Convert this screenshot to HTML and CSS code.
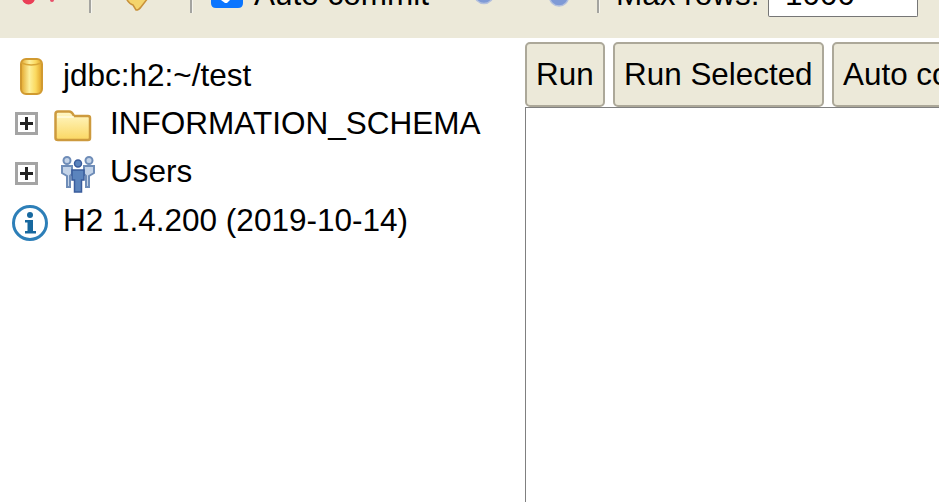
FILE: index.html
```html
<!DOCTYPE html>
<html lang="en">
<head>
  <meta charset="UTF-8" />
  <title>H2 Console</title>
  <link rel="stylesheet" href="styles.css">
</head>
<body>

  <div class="toolbar">
    <svg class="tool-icon icon-stop" width="40" height="20" viewBox="0 0 40 20">
      <circle cx="10.500" cy="-2" r="6.500" fill="#ea3f57"/>
      <circle cx="34" cy="0" r="2" fill="#e8506a"/>
    </svg>
    <span class="sep sep-first"></span>
    <svg class="tool-icon icon-refresh" width="30" height="20" viewBox="0 0 30 20">
      <path d="M4 -2 Q7 4 11 5 L14 10 Q17 10 19 7 L26 -2 Z" fill="#f4d46c" stroke="#c8913a" stroke-width="1.500"/>
    </svg>
    <span class="sep sep-second"></span>
    <svg class="checkbox" width="32" height="8" viewBox="0 0 32 8">
      <path d="M0 -6 L32 -6 L32 3 Q32 8 27 8 L5 8 Q0 8 0 3 Z" fill="#0a75ff"/>
      <path d="M10 0 L14 3 L16 3 L19 0 Z" fill="white"/>
    </svg>
    <span class="tool-label label-auto">Auto commit</span>
    <svg class="tool-icon icon-round" width="24" height="20" viewBox="0 0 24 20">
      <circle cx="12" cy="-6" r="9.500" fill="#7f9ad6" stroke="#b3c0de" stroke-width="1.500"/>
    </svg>
    <svg class="tool-icon icon-round-two" width="24" height="20" viewBox="0 0 24 20">
      <circle cx="12" cy="-3.500" r="9.500" fill="#7f9ad6" stroke="#b3c0de" stroke-width="1.500"/>
    </svg>
    <span class="sep sep-third"></span>
    <span class="tool-label label-rows">Max rows:</span>
    <div class="rows-select"><span class="rows-value">1000</span></div>
  </div>

  <div class="main">
    <div class="tree">
      <div class="tree-row">
        <svg class="tree-icon soft" width="38" height="40" viewBox="0 0 38 40">
          <defs>
            <linearGradient id="can" x1="0" x2="1" y1="0" y2="0">
              <stop offset="0" stop-color="#e3a62b"/>
              <stop offset="0.4" stop-color="#fdf09c"/>
              <stop offset="0.7" stop-color="#fbd95f"/>
              <stop offset="1" stop-color="#e0a126"/>
            </linearGradient>
          </defs>
          <rect x="9" y="4" width="21" height="35" rx="5" fill="url(#can)" stroke="#d19a30" stroke-width="2"/>
          <path d="M9.500 8 Q19 12 29.500 8" fill="none" stroke="#d9a636" stroke-width="1.500"/>
        </svg>
        <span>jdbc:h2:~/test</span>
      </div>
      <div class="tree-row">
        <span class="plus-box"></span>
        <svg class="folder soft" width="38" height="32" viewBox="0 0 38 32">
          <defs>
            <linearGradient id="fold" x1="0" x2="0" y1="0" y2="1">
              <stop offset="0" stop-color="#fff8c8"/>
              <stop offset="1" stop-color="#fbd762"/>
            </linearGradient>
          </defs>
          <path d="M1.500 4 Q1.500 1.500 4 1.500 L15 1.500 Q18 1.500 20 6 L34 6 Q36 6 36 8 L36 28 Q36 30 34 30 L4 30 Q1.500 30 1.500 28 Z" fill="url(#fold)" stroke="#cd9a3e" stroke-width="2.500"/>
          <path d="M3 7 L20 7" stroke="#fffbe0" stroke-width="1.500"/>
        </svg>
        <span>INFORMATION_SCHEMA</span>
      </div>
      <div class="tree-row">
        <span class="plus-box plus-low"></span>
        <svg class="users soft" width="44" height="38" viewBox="0 0 44 38">
          <g fill="#c3d3e8" stroke="#6f8db8" stroke-width="2">
            <circle cx="13" cy="4.500" r="3.500"/>
            <path d="M8 10 L18 10 L18 18 L16 20 L16 31 L13 31 L13 20 L8 17 Z"/>
            <circle cx="35" cy="4.500" r="3.500"/>
            <path d="M30 10 L40 10 L40 17 L35 20 L35 31 L32 31 L32 20 L30 18 Z"/>
          </g>
          <g fill="#5b84bd" stroke="#3a5c9c" stroke-width="1.500">
            <circle cx="24" cy="7.500" r="3.500"/>
            <path d="M18 14 L30 14 L30 24 L27.500 24 L27.500 36 L20.500 36 L20.500 24 L18 24 Z"/>
          </g>
        </svg>
        <span>Users</span>
      </div>
      <div class="tree-row">
        <svg class="tree-icon info soft" width="38" height="38" viewBox="0 0 38 38">
          <circle cx="18" cy="19" r="16.500" fill="#fff" stroke="#2d7fb8" stroke-width="3"/>
          <circle cx="18" cy="11" r="3" fill="#17689f"/>
          <path d="M13 16 L21 16 L21 27 L24 27 L24 29.500 L13 29.500 L13 27 L15.500 27 L15.500 18.500 L13 18.500 Z" fill="#17689f"/>
        </svg>
        <span>H2 1.4.200 (2019-10-14)</span>
      </div>
    </div>

    <div class="query">
      <div class="buttons">
        <button>Run</button>
        <button>Run Selected</button>
        <button>Auto complete</button>
        <button>Clear</button>
      </div>
      <div class="sql-box"></div>
    </div>
  </div>

</body>
</html>
```

FILE: styles.css
```css
* {
  box-sizing: border-box;
  margin: 0;
  padding: 0;
}
html, body {
  height: 100%;
  width: 100%;
  overflow: hidden;
}
body {
  background: white;
  color: black;
  font-family: "Liberation Sans", Arial, sans-serif;
  font-size: 31.5px;
}
.toolbar {
  background: #ece9d9;
  height: 38px;
  display: flex;
  align-items: flex-start;
  overflow: hidden;
  padding-left: 18px;
}
.tool-icon {
  flex: none;
}
.soft {
  filter: blur(0.4px);
}
.toolbar svg {
  filter: blur(0.5px);
}
.sep {
  width: 3px;
  height: 13px;
  background: #a4a4a0;
  border-right: 1px solid #f6f5ee;
  flex: none;
}
.sep-first { margin-left: 31px; }
.icon-refresh { margin-left: 30px; }
.sep-second { margin-left: 38px; }
.checkbox {
  margin-left: 18px;
  flex: none;
}
.toolbar .checkbox {
  filter: none;
}
.tool-label {
  line-height: 36px;
  margin-top: -24px;
  white-space: nowrap;
  flex: none;
}
.label-auto { margin-left: 11px; }
.icon-round { margin-left: 43px; }
.icon-round-two { margin-left: 51px; }
.sep-third { margin-left: 26px; }
.label-rows { margin-left: 16px; }
.rows-select {
  width: 150px;
  height: 17px;
  margin-left: auto;
  margin-right: 21px;
  background: white;
  border: 1px solid #767676;
  border-top: none;
  border-radius: 0 0 2px 2px;
  padding-left: 16px;
  overflow: hidden;
  flex: none;
}
.rows-value {
  display: block;
  line-height: 0;
  margin-top: -6px;
}
.main {
  display: flex;
  height: 464px;
}
.tree {
  width: 525px;
  flex: none;
  padding-top: 13px;
}
.tree-row {
  display: flex;
  align-items: center;
  height: 48.3px;
  white-space: nowrap;
}
.tree-icon {
  flex: none;
  margin-left: 12px;
  margin-right: 13px;
}
.info {
  margin-top: 6px;
}
.plus-box {
  width: 23px;
  height: 23px;
  margin-left: 15px;
  border: 3px solid #a4a4a4;
  background:
    linear-gradient(#222, #222) center / 13px 3px no-repeat,
    linear-gradient(#222, #222) center / 3px 13px no-repeat,
    white;
  flex: none;
}
.plus-low {
  margin-top: 4px;
}
.folder {
  flex: none;
  margin-left: 16px;
  margin-right: 18px;
  margin-top: 5px;
}
.users {
  flex: none;
  margin-left: 16px;
  margin-right: 12px;
  margin-top: 6px;
}
.query {
  flex: 1;
  min-width: 0;
  overflow: hidden;
}
.buttons {
  display: flex;
  gap: 8.5px;
  padding-top: 4px;
  height: 69px;
  white-space: nowrap;
}
button {
  font-family: "Liberation Sans", Arial, sans-serif;
  font-size: 31.4px;
  color: black;
  background: #ece9d9;
  border: 2px solid #aca899;
  border-radius: 5px;
  padding: 1px 9px 0;
  height: 65px;
  flex: none;
}
.sql-box {
  border-left: 1px solid #808080;
  border-top: 1px solid #808080;
  height: 400px;
}
```
